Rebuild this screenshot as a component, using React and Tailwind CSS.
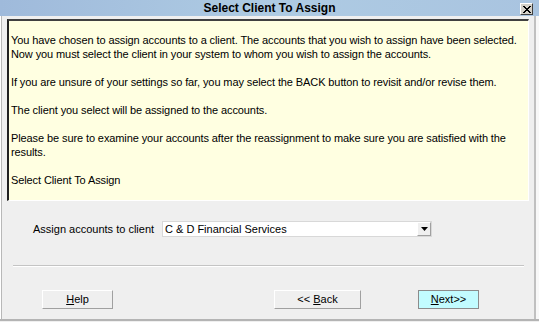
import React from 'react';

const paragraphs = [
  [
    'You have chosen to assign accounts to a client. The accounts that you wish to assign have been selected.',
    'Now you must select the client in your system to whom you wish to assign the accounts.',
  ],
  ['If you are unsure of your settings so far, you may select the BACK button to revisit and/or revise them.'],
  ['The client you select will be assigned to the accounts.'],
  [
    'Please be sure to examine your accounts after the reassignment to make sure you are satisfied with the',
    'results.',
  ],
];

const WinButton = ({ children, className = '' }) => (
  <button
    className={`h-[19px] flex items-center justify-center border border-t-white border-l-white border-r-[#a0a0a0] border-b-[#a0a0a0] text-[11px] text-black ${className}`}
  >
    {children}
  </button>
);

export default function App() {
  return (
    <div className="w-[539px] h-[322px] flex flex-col bg-[#efefef] text-black font-['Liberation_Sans',Arial,sans-serif] text-[11px] overflow-hidden">
      {/* Title bar */}
      <div className="h-[16px] relative flex items-center justify-center bg-gradient-to-r from-[#9fbadb] via-[#aecbe3] to-[#a9c4e0]">
        <span className="font-bold text-[12px] leading-none">Select Client To Assign</span>
        <div className="absolute right-[6px] top-[3px] w-[13px] h-[12px] bg-[#d4d0c8] border border-t-white border-l-white border-r-[#404040] border-b-[#404040] flex items-center justify-center">
          <svg width="8" height="7" viewBox="0 0 8 7">
            <path d="M0 0 L7 7 M1 0 L8 7 M7 0 L0 7 M8 0 L1 7" stroke="#000" strokeWidth="1" />
          </svg>
        </div>
      </div>

      <div className="flex-1 flex">
        {/* left window edge */}
        <div className="w-[2px] border-l border-l-white bg-[#b8b8b8]" />

        <div className="flex-1 flex flex-col">
          {/* Yellow info panel */}
          <div className="mt-[3px] ml-[5px] mr-[5px] h-[182px] bg-[#ffffe1] border-t-2 border-l-2 border-t-[#404040] border-l-[#202020] border-b border-r border-b-white border-r-white pl-[2px] pt-[12px] leading-[14px] tracking-[-0.1px]">
            {paragraphs.map((p, i) => (
              <div key={i} className="mb-[14px]">
                {p.map((line) => (
                  <div key={line} className="whitespace-nowrap">{line}</div>
                ))}
              </div>
            ))}
            <div className="mt-[5px]">Select Client To Assign</div>
          </div>

          {/* Client selection */}
          <div className="mt-[20px] flex items-center">
            <span className="ml-[31px] w-[129px]">Assign accounts to client</span>
            <div className="w-[270px] h-[16px] bg-white border border-[#d8d8d8] flex items-center">
              <span className="flex-1 pl-[2px] leading-none">C &amp; D Financial Services</span>
              <div className="w-[14px] h-[14px] bg-[#efefef] border border-t-white border-l-white border-r-[#a0a0a0] border-b-[#a0a0a0] flex items-center justify-center">
                <svg width="7" height="4" viewBox="0 0 7 4">
                  <path d="M0 0 H7 L3.5 4 Z" fill="#000" />
                </svg>
              </div>
            </div>
          </div>

          {/* separator */}
          <div className="mt-[27px] ml-[11px] mr-[10px] h-[2px] border-t border-t-[#c4c4c4] border-b border-b-white" />

          {/* buttons */}
          <div className="mt-[23px] flex">
            <WinButton className="ml-[40px] w-[71px]">
              <span><u>H</u>elp</span>
            </WinButton>
            <WinButton className="ml-[161px] w-[87px]">
              <span>&lt;&lt; <u>B</u>ack</span>
            </WinButton>
            <button className="ml-[57px] w-[61px] h-[19px] flex items-center justify-center bg-[#c2fcff] border border-[#8c8c8c] text-[11px]">
              <span><u>N</u>ext&gt;&gt;</span>
            </button>
          </div>
        </div>

        {/* right window edge */}
        <div className="w-[5px] flex">
          <div className="w-[2px] bg-[#c0c0c0]" />
          <div className="flex-1 bg-[#f8f8f8]" />
        </div>
      </div>

      {/* bottom edge */}
      <div className="h-[3px] bg-[#b4b4b4] border-b border-b-[#efefef]" />
    </div>
  );
}
